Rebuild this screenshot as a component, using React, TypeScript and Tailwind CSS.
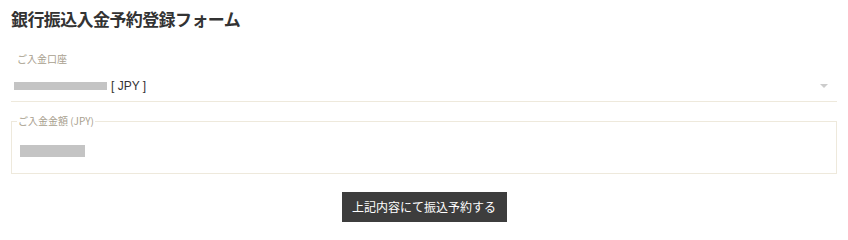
import React from "react";

export default function App() {
  const jp = { fontFamily: '"Noto Sans CJK JP", "Noto Sans", "Liberation Sans", sans-serif' };
  return (
    <div className="w-[848px] h-[234px] bg-white px-[11px] pt-[6px]" style={jp}>
      <h1 className="text-[17px] font-bold leading-[26px] text-[#333333] tracking-[-0.6px]">
        銀行振込入金予約登録フォーム
      </h1>
      <div className="mt-[20px]">
        <div className="pl-[6px] text-[10px] leading-[14px] text-[#a8a08e]">ご入金口座</div>
        <div className="mt-[8px] pb-[3px] border-b border-[#eee9dc]">
          <div className="flex items-center h-[24px]">
            <div className="ml-[3px] w-[93px] h-[8px] bg-[#c4c4c4]" />
            <span
              className="ml-[4px] text-[12px] leading-[16px] text-[#333333]"
              style={{ fontFamily: '"Liberation Sans", "Noto Sans CJK JP", sans-serif' }}
            >
              [ JPY ]
            </span>
            <div className="ml-auto mr-[9px] w-0 h-0 border-l-[4px] border-r-[4px] border-t-[4px] border-l-transparent border-r-transparent border-t-[#cccccc]" />
          </div>
        </div>
      </div>
      <fieldset className="mt-[13px] h-[59px] border border-[#eee9dc] px-[5px] pt-0 m-0 min-w-0">
        <legend className="px-[1px] text-[10px] leading-[12px] text-[#a8a08e]">
          ご入金金額 (JPY)
        </legend>
        <div className="ml-[3px] mt-[18px] w-[65px] h-[12px] bg-[#c4c4c4]" />
      </fieldset>
      <div className="flex justify-center mt-[18px]">
        <button className="w-[165px] h-[30px] bg-[#3d3d3d] text-white text-[12px] leading-[30px]">
          上記内容にて振込予約する
        </button>
      </div>
    </div>
  );
}
